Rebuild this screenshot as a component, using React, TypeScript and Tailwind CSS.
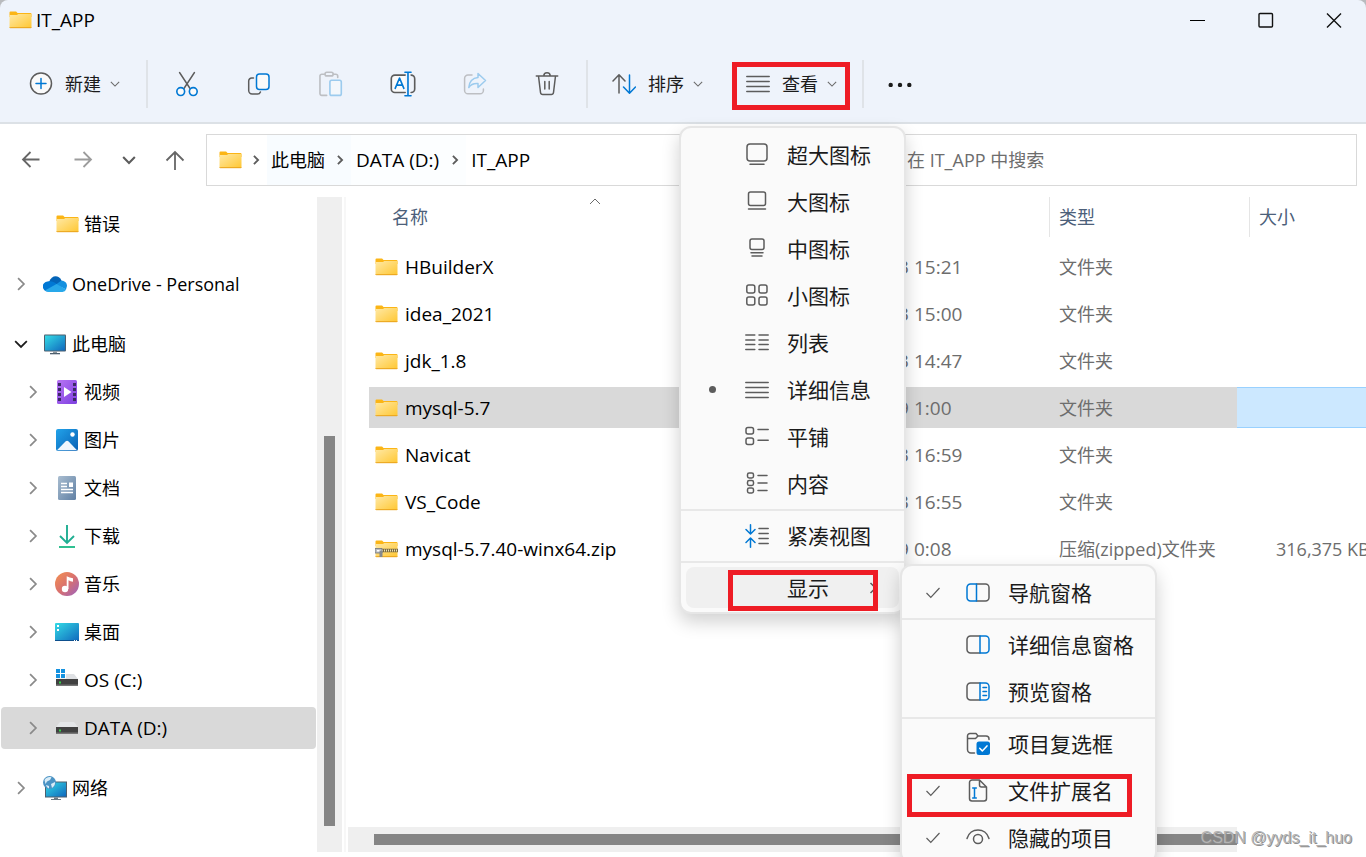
import type { ReactNode } from "react";

const GREY = "#5c5c5c";
const BLUE = "#0078d4";

interface TreeItem {
  label: string;
  icon: ReactNode;
  level: 0 | 1;
  state?: "open" | "closed";
  selected?: boolean;
  spaced?: boolean;
  drive?: boolean;
}

interface FileRow {
  name: string;
  date: string;
  time: string;
  type: string;
  size?: string;
  zip?: boolean;
  selected?: boolean;
}

interface MenuEntry {
  label: string;
  icon?: ReactNode;
  mark?: "dot" | "check";
  active?: boolean;
  submenu?: boolean;
  divided?: boolean;
}

/* ---------- icons ---------- */

function Icon({ children, size = 24 }: { children: ReactNode; size?: number }) {
  return (
    <svg
      width={size}
      height={size}
      viewBox="0 0 24 24"
      fill="none"
      stroke={GREY}
      strokeWidth="1.5"
      strokeLinecap="round"
      strokeLinejoin="round"
      className="shrink-0"
      aria-hidden="true"
    >
      {children}
    </svg>
  );
}

function FolderIcon({ zip }: { zip?: boolean }) {
  return (
    <svg width="23" height="18" viewBox="0 0 23 18" className="shrink-0" aria-hidden="true">
      <defs>
        <linearGradient id="folder" x1="0" y1="0" x2="1" y2="1">
          <stop offset="0" stopColor="#ffe9a6" />
          <stop offset="1" stopColor="#ffc732" />
        </linearGradient>
      </defs>
      <path d="M0.500 1.500a1 1 0 0 1 1-1h5.600l1.400 1.500H21.500a1 1 0 0 1 1 1V6h-22z" fill="#fbb516" />
      <path d="M0.500 4H8l1.300-1H22a.5.5 0 0 1 .5.5V16a1 1 0 0 1-1 1h-20a1 1 0 0 1-1-1z" fill="url(#folder)" />
      <path d="M0.500 16a1 1 0 0 0 1 .7h20a1 1 0 0 0 1-.7" fill="none" stroke="#e9a21b" />
      {zip && (
        <>
          <path d="M6 10.500h17" stroke="#7a6a3c" strokeWidth="3.500" />
          <path d="M7 10.500h16" stroke="#efe2b4" strokeWidth="2" strokeDasharray="1 1" />
          <path d="M0 8.500h7v4.500H0z" fill="#b9bcc0" stroke="#6f7378" strokeWidth=".8" />
          <path d="M4.500 11h3v6h-3z" fill="#85898d" />
          <path d="M2 10h2.500v1.500H2z" fill="#fff" />
        </>
      )}
    </svg>
  );
}

function Chevron({ dir, size = 12, color = "#8a8a8a", weight = 1.5 }: { dir: "up" | "down" | "right"; size?: number; color?: string; weight?: number }) {
  const paths = { up: "M1 7l5-5 5 5", down: "M1 3.500l5 5 5-5", right: "M3.500 1l5 5-5 5" };
  return (
    <svg width={size} height={size} viewBox="0 0 12 12" fill="none" stroke={color} strokeWidth={weight} className="shrink-0" aria-hidden="true">
      <path d={paths[dir]} />
    </svg>
  );
}

const newIcon = (
  <Icon>
    <circle cx="12" cy="11.500" r="10.500" fill="#fafafa" />
    <path d="M12 6.500v10M7 11.500h10" stroke={BLUE} />
  </Icon>
);
const cutIcon = (
  <Icon size={26}>
    <path d="M5.200 1.500l10 15.200M18.800 1.500l-10 15.200" />
    <circle cx="6.200" cy="19" r="3.600" stroke={BLUE} fill="#fafafa" />
    <circle cx="17.800" cy="19" r="3.600" stroke={BLUE} fill="#fafafa" />
  </Icon>
);
const copyIcon = (
  <Icon>
    <path d="M6.500 6H4.700A3 3 0 0 0 1.700 9v9.600A3.400 3.400 0 0 0 5.100 22h5.400a3 3 0 0 0 2.900-2" />
    <rect x="9.500" y="2" width="12.500" height="15.500" rx="3" stroke={BLUE} fill="#fafafa" />
  </Icon>
);
const pasteIcon = (
  <Icon size={26}>
    <path d="M6 3H3.500A1.700 1.700 0 0 0 1.800 4.700v16.100a1.700 1.700 0 0 0 1.700 1.700H8M14 3h2.500a1.700 1.700 0 0 1 1.700 1.700V6" stroke="#bdbfc3" />
    <rect x="6.500" y="1.200" width="7.500" height="3.300" rx="1.600" stroke="#bdbfc3" />
    <rect x="11" y="8.500" width="10.500" height="14" rx="1.600" stroke="#9ccbee" fill="#f3f7fb" />
  </Icon>
);
const renameIcon = (
  <Icon size={26}>
    <path d="M14 3.800H4.500a3.300 3.300 0 0 0-3.300 3.300v9.400a3.300 3.300 0 0 0 3.300 3.300H14" fill="#fafafa" />
    <path d="M19.500 3.800a3.300 3.300 0 0 1 3.300 3.300v9.400a3.300 3.300 0 0 1-3.300 3.300" />
    <path d="M4.800 16l4-9.500 4 9.500M6.200 13h5.200M16.600 1.200v21.600M13.800 1.200h5.600M13.800 22.800h5.600" stroke={BLUE} />
  </Icon>
);
const shareIcon = (
  <Icon>
    <path d="M9 3H5a3.400 3.400 0 0 0-3.400 3.400v12A3.400 3.400 0 0 0 5 21.800h12a3.400 3.400 0 0 0 3.400-3.400V17" stroke="#bdbfc3" />
    <path d="M15 1.500l7.500 7-7.500 7v-4c-4.500-.3-7.500 1.200-9.200 4C6 10 9.500 5.800 15 5.500z" stroke="#9ccbee" />
  </Icon>
);
const deleteIcon = (
  <Icon>
    <path d="M1.300 4h21.400M8.800 4a3.200 3.200 0 0 1 6.400 0M3.500 4l2 16.500a2.300 2.300 0 0 0 2.300 2h8.400a2.300 2.300 0 0 0 2.300-2l2-16.500M9.800 9.500v7.500M14.200 9.500v7.500" />
  </Icon>
);
const sortIcon = (
  <Icon>
    <path d="M7 21V3M1 9l6-6.300L13 9" />
    <path d="M17.500 3v18M11.500 15l6 6.300 6-6.300" stroke={BLUE} />
  </Icon>
);
const linesIcon = (
  <Icon>
    <path d="M.8 4.500h22.400M.8 9.500h22.400M.8 14.500h22.400M.8 19.500h22.400" />
  </Icon>
);

function PaneIcon({ side, preview }: { side: "left" | "right"; preview?: boolean }) {
  const left = "M9 3H4.500A3.500 3.500 0 0 0 1 6.500v10A3.500 3.500 0 0 0 4.500 20H9";
  const right = "M14 3h5.500A3.500 3.500 0 0 1 23 6.500v10a3.500 3.500 0 0 1-3.500 3.500H14z";
  if (side === "left") {
    return (
      <Icon>
        <path d="M10.500 3h9A3.500 3.500 0 0 1 23 6.500v10a3.500 3.500 0 0 1-3.500 3.500h-9" />
        <path d={left + "h1.500V3z"} stroke={BLUE} />
      </Icon>
    );
  }
  return (
    <Icon>
      <path d={left + "h5M9 3h5"} />
      <path d={right} stroke={BLUE} />
      {preview && <path d="M17 7.500h3.500M17 11.500h3.500M17 15.500h3.500" stroke={BLUE} />}
    </Icon>
  );
}

const tree: TreeItem[] = [
  { label: "错误", icon: <FolderIcon />, level: 1 },
  {
    label: "OneDrive - Personal",
    level: 0,
    state: "closed",
    spaced: true,
    icon: (
      <svg width="24" height="24" viewBox="0 0 24 24" aria-hidden="true">
        <path d="M6 10C8.500 3 15.500 2.500 18.500 8.500l1 3.500-8 3z" fill="#0364b8" />
        <path d="M5 19.500A5 5 0 0 1 4.500 9.500c3-1 6 .3 7.500 1.300l6 4-10 4.500z" fill="#0078d4" />
        <path d="M13 12.500l5-3.800c3.500-.5 6 2 6 5.300l-1 3.500z" fill="#1490df" />
        <path d="M2 18.500l11.500-6.500 9.700 5.500A4.500 4.500 0 0 1 19.500 20H5.500a5 5 0 0 1-3.500-1.500z" fill="#28a8ea" />
      </svg>
    ),
  },
  {
    label: "此电脑",
    level: 0,
    state: "open",
    spaced: true,
    icon: (
      <svg width="24" height="24" viewBox="0 0 24 24" aria-hidden="true">
        <defs>
          <linearGradient id="screen" x1="0" y1="0" x2="1" y2="1">
            <stop offset="0" stopColor="#34dbe6" />
            <stop offset="1" stopColor="#1068bd" />
          </linearGradient>
        </defs>
        <rect x="1" y="2.500" width="22" height="17" rx="1" fill="#4d5f6e" />
        <rect x="2" y="3.500" width="20" height="15" fill="url(#screen)" />
        <path d="M10 19.500h4V21h-4z" fill="#8c959c" />
        <path d="M7 21h10v1.300H7z" fill="#4d5f6e" />
      </svg>
    ),
  },
  {
    label: "视频",
    level: 1,
    state: "closed",
    icon: (
      <svg width="24" height="24" viewBox="0 0 24 24" aria-hidden="true">
        <defs>
          <linearGradient id="video" x1="0" y1="0" x2="1" y2="1">
            <stop offset="0" stopColor="#b874f4" />
            <stop offset="1" stopColor="#7d3fe0" />
          </linearGradient>
        </defs>
        <rect x="2" y="0" width="20" height="24" rx="1.500" fill="url(#video)" />
        <path d="M4.500 3v20M19.500 3v20" stroke="#3b2a66" strokeWidth="3" strokeDasharray="3 2" />
        <path d="M9 7l7.500 5L9 17z" fill="#fff" />
      </svg>
    ),
  },
  {
    label: "图片",
    level: 1,
    state: "closed",
    icon: (
      <svg width="24" height="24" viewBox="0 0 24 24" aria-hidden="true">
        <defs>
          <linearGradient id="photo" x1="0" y1="0" x2="1" y2="1">
            <stop offset="0" stopColor="#22a3ea" />
            <stop offset="1" stopColor="#0860b4" />
          </linearGradient>
        </defs>
        <rect x="1" y="1" width="22" height="22" rx="2" fill="url(#photo)" />
        <path d="M2 22.300l8.700-9a2 2 0 0 1 2.700 0l8.600 9z" fill="#eef6fd" />
        <circle cx="17.500" cy="6.500" r="2.200" fill="#fff" />
      </svg>
    ),
  },
  {
    label: "文档",
    level: 1,
    state: "closed",
    icon: (
      <svg width="24" height="24" viewBox="0 0 24 24" aria-hidden="true">
        <defs>
          <linearGradient id="docs" x1="0" y1="0" x2="1" y2="1">
            <stop offset="0" stopColor="#a9bdd0" />
            <stop offset="1" stopColor="#6080a4" />
          </linearGradient>
        </defs>
        <rect x="3" y="0" width="18" height="24" rx="1.500" fill="url(#docs)" />
        <path d="M6 7.500h6M6 10.500h6M6 13.500h12M6 16.500h12" stroke="#fff" strokeWidth="1.400" />
        <path d="M14 6.500h4v4.500h-4z" fill="#fff" />
      </svg>
    ),
  },
  {
    label: "下载",
    level: 1,
    state: "closed",
    icon: (
      <svg width="24" height="24" viewBox="0 0 24 24" fill="none" aria-hidden="true">
        <path d="M12 1v17M5 12l7 7 7-7" stroke="#1fae92" strokeWidth="1.900" />
        <path d="M4 23h16" stroke="#25bd8c" strokeWidth="1.900" />
      </svg>
    ),
  },
  {
    label: "音乐",
    level: 1,
    state: "closed",
    icon: (
      <svg width="24" height="24" viewBox="0 0 24 24" aria-hidden="true">
        <defs>
          <linearGradient id="music" x1="0" y1="0" x2="1" y2="1">
            <stop offset="0" stopColor="#f4914f" />
            <stop offset=".5" stopColor="#d9716f" />
            <stop offset="1" stopColor="#9a62c0" />
          </linearGradient>
        </defs>
        <circle cx="12" cy="12" r="12" fill="url(#music)" />
        <circle cx="10" cy="17" r="3.200" fill="#fff" />
        <path d="M11.700 17V4.200c2 1 4 1.600 6.300 2v3.600c-1.800-.2-3.300-.7-4.500-1.500V17z" fill="#fff" />
      </svg>
    ),
  },
  {
    label: "桌面",
    level: 1,
    state: "closed",
    icon: (
      <svg width="24" height="24" viewBox="0 0 24 24" aria-hidden="true">
        <rect x="0" y="3" width="24" height="18" rx="1" fill="url(#screen)" />
        <path d="M0 20h24v1H0z" fill="#0d4f8d" />
        <path d="M2 5h2v2H2zM2 9h2v2H2zM19 20h1v1h-1zM21 20h1v1h-1z" fill="#fff" />
      </svg>
    ),
  },
  {
    label: "OS (C:)",
    level: 1,
    state: "closed",
    drive: true,
    icon: (
      <svg width="24" height="24" viewBox="0 0 24 24" aria-hidden="true">
        <path d="M9 6h10l4 5H1z" fill="#dfe1e4" />
        <path d="M1 11h22v7H1z" fill="#414141" />
        <path d="M1 16.500h22V18H1z" fill="#777" />
        <path d="M4 13.500h2v2H4z" fill="#35d04a" />
        <path d="M0 0h11v10.500H0z" fill="#fff" />
        <path d="M1 1h4v4H1zM6 1h4v4H6zM1 6h4v4H1zM6 6h4v4H6z" fill="#1492e0" />
      </svg>
    ),
  },
  {
    label: "DATA (D:)",
    level: 1,
    state: "closed",
    drive: true,
    selected: true,
    icon: (
      <svg width="24" height="24" viewBox="0 0 24 24" aria-hidden="true">
        <path d="M5 6h14l4 5H1z" fill="#e4e6e8" />
        <path d="M1 11h22v7H1z" fill="#414141" />
        <path d="M1 16.500h22V18H1z" fill="#777" />
        <path d="M4 13.500h2v2H4z" fill="#35d04a" />
      </svg>
    ),
  },
  {
    label: "网络",
    level: 0,
    state: "closed",
    spaced: true,
    icon: (
      <svg width="24" height="24" viewBox="0 0 24 24" aria-hidden="true">
        <rect x="2" y="5.500" width="22" height="16" fill="#4d5f6e" />
        <rect x="3" y="6.500" width="20" height="14" fill="url(#screen)" />
        <path d="M11 21.500h4V23h-4zM8 23h10v1H8z" fill="#6b7882" />
        <circle cx="6.500" cy="6.500" r="6.500" fill="#4b93c4" />
        <path d="M1.500 4c2-3 5-3.500 7-2.500L7 4 4 5.500 2.500 8zM8 8l4-2c.3 3-1 4.500-3 6zM3 9l3 1v2.500C4.500 12 3.500 11 3 9z" fill="#d9ecf7" />
      </svg>
    ),
  },
];

const files: FileRow[] = [
  { name: "HBuilderX", date: "2022/10/13", time: "15:21", type: "文件夹" },
  { name: "idea_2021", date: "2022/10/13", time: "15:00", type: "文件夹" },
  { name: "jdk_1.8", date: "2022/10/13", time: "14:47", type: "文件夹" },
  { name: "mysql-5.7", date: "2022/10/19", time: "1:00", type: "文件夹", selected: true },
  { name: "Navicat", date: "2022/10/13", time: "16:59", type: "文件夹" },
  { name: "VS_Code", date: "2022/10/13", time: "16:55", type: "文件夹" },
  { name: "mysql-5.7.40-winx64.zip", date: "2022/10/19", time: "0:08", type: "压缩(zipped)文件夹", size: "316,375 KB", zip: true },
];

const viewMenu: MenuEntry[] = [
  {
    label: "超大图标",
    icon: (
      <Icon>
        <rect x="2" y="1" width="20" height="17" rx="3" />
        <path d="M5 21.300h14" />
      </Icon>
    ),
  },
  {
    label: "大图标",
    icon: (
      <Icon>
        <rect x="3.500" y="2" width="17" height="13.500" rx="2" />
        <path d="M3.500 19h17" />
      </Icon>
    ),
  },
  {
    label: "中图标",
    icon: (
      <Icon>
        <rect x="5" y="2" width="14" height="10.500" rx="2" />
        <path d="M6 15.700h12M7 18.900h10" />
      </Icon>
    ),
  },
  {
    label: "小图标",
    icon: (
      <Icon>
        <rect x="1.800" y="1" width="8" height="8" rx="2" />
        <rect x="14" y="1" width="8" height="8" rx="2" />
        <rect x="1.800" y="13" width="8" height="8" rx="2" />
        <rect x="14" y="13" width="8" height="8" rx="2" />
      </Icon>
    ),
  },
  {
    label: "列表",
    icon: (
      <Icon>
        <path d="M.8 4h9M.8 9h9M.8 13.500h9M.8 18.500h9M14 4h9.200M14 9h9.200M14 13.500h9.200M14 18.500h9.200" />
      </Icon>
    ),
  },
  { label: "详细信息", icon: linesIcon, mark: "dot" },
  {
    label: "平铺",
    icon: (
      <Icon>
        <rect x="1" y="2.500" width="7.500" height="6.500" rx="2" />
        <rect x="1" y="13" width="7.500" height="6.500" rx="2" />
        <path d="M13 4.500h10.200M13 15.200h10.200" />
      </Icon>
    ),
  },
  {
    label: "内容",
    icon: (
      <Icon>
        <rect x="2.500" y="1" width="6" height="5" rx="1.700" />
        <rect x="2.500" y="8.500" width="6" height="5" rx="1.700" />
        <rect x="2.500" y="16" width="6" height="5" rx="1.700" />
        <path d="M13 3.500h9M13 11h9M13 18.500h9" />
      </Icon>
    ),
  },
  {
    label: "紧凑视图",
    divided: true,
    icon: (
      <Icon>
        <path d="M5.500.8v8.700M1 5.500l4.500 4.500L10 5.500M5.500 23.200v-8.700M1 18.500L5.500 14l4.500 4.500" stroke={BLUE} />
        <path d="M14 4.500h9.200M14 9.500h9.200M14 14.500h9.200M14 19.500h9.200" />
      </Icon>
    ),
  },
  { label: "显示", divided: true, active: true, submenu: true },
];

const showMenu: MenuEntry[] = [
  { label: "导航窗格", mark: "check", icon: <PaneIcon side="left" /> },
  { label: "详细信息窗格", divided: true, icon: <PaneIcon side="right" /> },
  { label: "预览窗格", icon: <PaneIcon side="right" preview /> },
  {
    label: "项目复选框",
    divided: true,
    icon: (
      <Icon>
        <path d="M8.500 21H5a3.500 3.500 0 0 1-3.500-3.500V4A2.500 2.500 0 0 1 4 1.500h6L12 4h8a3 3 0 0 1 3 3v.5M1.500 6.500h8L12 4" />
        <rect x="10.500" y="9.500" width="13.500" height="13.500" rx="2.500" fill={BLUE} stroke="none" />
        <path d="M13.700 16.300l2.600 2.600 4.700-5" stroke="#fff" />
      </Icon>
    ),
  },
  {
    label: "文件扩展名",
    mark: "check",
    icon: (
      <Icon>
        <path d="M13.500 1H6a2.500 2.500 0 0 0-2.500 2.500v16A2.500 2.500 0 0 0 6 22h12a2.500 2.500 0 0 0 2.500-2.500V8zv5a2 2 0 0 0 2 2h5" />
        <path d="M8.500 9v10M6.700 9h3.600M6.700 19h3.600" stroke={BLUE} />
      </Icon>
    ),
  },
  {
    label: "隐藏的项目",
    mark: "check",
    icon: (
      <Icon>
        <path d="M1 12.500C4 1 20 1 23 12.500" />
        <circle cx="12" cy="13" r="4.500" />
      </Icon>
    ),
  },
];

/* ---------- pieces ---------- */

function ToolButton({ label, icon }: { label: string; icon: ReactNode }) {
  return (
    <button type="button" aria-label={label} className="flex h-12 w-[72px] items-center justify-center">
      {icon}
    </button>
  );
}

function LabelButton({ label, icon }: { label: string; icon: ReactNode }) {
  return (
    <button type="button" className="flex h-12 items-center">
      {icon}
      <span className="ml-3 mr-[9px]">{label}</span>
      <Chevron dir="down" size={10} color="#6b6b6b" weight={1.3} />
    </button>
  );
}

function ToolDivider() {
  return <div className="h-12 w-[2px] bg-[#dfe3e8]" />;
}

function CrumbArrow() {
  return (
    <span className="flex h-full w-[22px] items-center justify-center">
      <Chevron dir="right" size={10} color="#5c5c5c" weight={2.2} />
    </span>
  );
}

function TreeRow({ item }: { item: TreeItem }) {
  return (
    <li className={item.spaced ? "pt-3" : ""}>
      <a
        href="#"
        className={`mx-px mb-[6px] flex h-[42px] items-center rounded-sm ${item.level === 1 ? "pl-[25px]" : "pl-[13px]"} ${
          item.selected ? "bg-[#d9d9d9]" : ""
        } ${item.drive ? "text-[19px]" : ""}`}
      >
        <span className="flex w-[14px] justify-center">
          {item.state && (
            <Chevron
              dir={item.state === "open" ? "down" : "right"}
              size={14}
              color={item.state === "open" ? "#1b1b1b" : "#8a8a8a"}
            />
          )}
        </span>
        <span className="ml-[15px] mr-[5px] flex w-6 justify-center">{item.icon}</span>
        {item.label}
      </a>
    </li>
  );
}

function Menu({ entries, label }: { entries: MenuEntry[]; label: string }) {
  return (
    <div
      role="menu"
      aria-label={label}
      className="rounded-xl border-2 border-[#e6e6e6] bg-[#fafafa] pb-px pt-[3px] text-[21px] text-[#1b1b1b] shadow-[0_8px_18px_rgba(0,0,0,0.18)]"
    >
      {entries.map((entry) => (
        <div key={entry.label}>
          {entry.divided && <div className="mb-px mt-[2px] h-[2px] bg-[#e8e8e8]" />}
          <div className="px-[5px] py-[3px]">
            <button
              type="button"
              role="menuitem"
              className={`flex h-[41px] w-full items-center rounded-lg pl-[14px] pr-5 ${entry.active ? "bg-[#f0f0f0]" : ""}`}
            >
              <span className="flex w-6 shrink-0 justify-center">
                {entry.mark === "dot" && <span className="size-[7px] rounded-full bg-[#5c5c5c]" />}
                {entry.mark === "check" && (
                  <svg width="14" height="14" viewBox="0 0 14 14" fill="none" stroke={GREY} strokeWidth="1.200" aria-hidden="true">
                    <path d="M.5 7l4.300 4.300L13.500 2" />
                  </svg>
                )}
              </span>
              <span className="ml-[21px] mr-[18px] flex w-6 shrink-0">{entry.icon}</span>
              <span className="flex-1 whitespace-nowrap text-left">{entry.label}</span>
              {entry.submenu && <Chevron dir="right" color="#5c5c5c" />}
            </button>
          </div>
        </div>
      ))}
    </div>
  );
}

export default function App() {
  return (
    <div className="relative flex h-screen flex-col overflow-hidden bg-white font-['Open_Sans','Noto_Sans_CJK_SC',sans-serif] text-[18px] leading-6 text-black">
      <div className="shrink-0 bg-[#b9bbbe]">
        <header className="rounded-t-lg border-b-2 border-[#dce1e6] bg-[#eef3fb]">
          <div className="flex h-10 items-center pl-[9px] pr-6">
            <FolderIcon />
            <h1 className="ml-1 flex-1 text-[19px]">IT_APP</h1>
            <div className="flex gap-[52px]">
              <button type="button" aria-label="最小化">
                <svg width="16" height="16" viewBox="0 0 16 16" fill="none" stroke="#000">
                  <path d="M0 8.500h15" />
                </svg>
              </button>
              <button type="button" aria-label="最大化">
                <svg width="16" height="16" viewBox="0 0 16 16" fill="none" stroke="#111" strokeWidth="1.400">
                  <rect x="1" y="1.500" width="13.500" height="13.500" rx="1" />
                </svg>
              </button>
              <button type="button" aria-label="关闭">
                <svg width="16" height="16" viewBox="0 0 16 16" fill="none" stroke="#111" strokeWidth="1.400">
                  <path d="M1 1.500l14 14M15 1.500l-14 14" />
                </svg>
              </button>
            </div>
          </div>
          <div className="flex items-center pb-[14px] pl-[29px] pt-5 text-[#1b1b1b]">
            <LabelButton label="新建" icon={newIcon} />
            <div className="flex items-center gap-[3px] pl-[26px] pr-6">
              <ToolDivider />
              <div className="flex">
                <ToolButton label="剪切" icon={cutIcon} />
                <ToolButton label="复制" icon={copyIcon} />
                <ToolButton label="粘贴" icon={pasteIcon} />
                <ToolButton label="重命名" icon={renameIcon} />
                <ToolButton label="共享" icon={shareIcon} />
                <ToolButton label="删除" icon={deleteIcon} />
              </div>
              <ToolDivider />
            </div>
            <div className="flex gap-[43px] pr-[25px]">
              <LabelButton label="排序" icon={sortIcon} />
              <LabelButton label="查看" icon={linesIcon} />
            </div>
            <ToolDivider />
            <ToolButton
              label="更多"
              icon={
                <svg width="24" height="6" viewBox="0 0 24 6" fill="#1b1b1b" aria-hidden="true">
                  <circle cx="2.700" cy="4" r="2.200" />
                  <circle cx="12" cy="4" r="2.200" />
                  <circle cx="21.300" cy="4" r="2.200" />
                </svg>
              }
            />
          </div>
        </header>
      </div>

      <div className="flex shrink-0 items-center pb-[11px] pl-5 pr-[9px] pt-[10px]">
        <nav className="flex w-[186px] items-center" aria-label="导航">
          <button type="button" aria-label="后退" className="mr-[30px]">
            <svg width="22" height="22" viewBox="0 0 22 22" fill="none" stroke="#666" strokeWidth="1.800">
              <path d="M19.500 10.500H3M10.500 3L3 10.500l7.500 7.500" />
            </svg>
          </button>
          <button type="button" aria-label="前进" className="mr-[28px]">
            <svg width="22" height="22" viewBox="0 0 22 22" fill="none" stroke="#9c9c9c" strokeWidth="1.800">
              <path d="M2.500 10.500H19M11.500 3l7.500 7.500-7.500 7.500" />
            </svg>
          </button>
          <button type="button" aria-label="最近" className="mr-[28px]">
            <Chevron dir="down" size={14} color="#5c5c5c" weight={1.8} />
          </button>
          <button type="button" aria-label="上移">
            <svg width="22" height="22" viewBox="0 0 22 22" fill="none" stroke="#666" strokeWidth="1.800">
              <path d="M11 21V3M2.500 11.500L11 3l8.500 8.500" />
            </svg>
          </button>
        </nav>
        <div className="flex h-[52px] flex-1 items-center border border-[#d9d9d9] pl-3">
          <FolderIcon />
          <div className="ml-[3px] flex h-full items-center">
            <CrumbArrow />
            <a href="#" className="flex h-full items-center bg-[#f8fcff] px-1">
              此电脑
            </a>
          </div>
          <div className="flex h-full items-center bg-[#f8fcff]">
            <CrumbArrow />
          </div>
          <div className="flex h-full items-center bg-[#fcfeff] text-[19px]">
            <a href="#" className="px-[5px]">
              DATA (D:)
            </a>
            <CrumbArrow />
          </div>
          <a href="#" className="px-[5px] text-[19px]">
            IT_APP
          </a>
        </div>
        <input
          type="search"
          aria-label="搜索"
          placeholder="在 IT_APP 中搜索"
          className="ml-[10px] h-[52px] w-[498px] border border-[#d9d9d9] pl-[47px] placeholder:text-[#6d6d6d] placeholder:opacity-100"
        />
      </div>

      <div className="flex min-h-0 flex-1 pb-[5px]">
        <ul className="w-[317px] shrink-0 pt-[6px]">
          {tree.map((item) => (
            <TreeRow key={item.label} item={item} />
          ))}
        </ul>
        <div className="flex w-[25px] shrink-0 flex-col items-center bg-[#efefef] pb-[26px]">
          <div className="mt-auto h-[62%] w-[11px] bg-[#858585]" />
        </div>
        <div className="ml-[2px] w-[2px] shrink-0 bg-[#f7f7f7]" />

        <main className="flex min-w-0 flex-1 flex-col overflow-hidden pl-[2px]">
          <div className="min-h-0 flex-1 overflow-hidden pl-[21px]">
            <table className="w-full table-fixed border-separate border-spacing-0 whitespace-nowrap text-left text-[#6d6d6d]">
              <colgroup>
                <col className="w-[438px]" />
                <col className="w-[242px]" />
                <col className="w-[188px]" />
                <col />
              </colgroup>
              <thead>
                <tr className="h-[46px] align-top text-[#4c607a]">
                  <th className="p-0 font-normal">
                    <div className="relative flex h-10 items-center pl-[23px]">
                      名称
                      <span className="absolute left-1/2 top-0 ml-px">
                        <Chevron dir="up" size={12} color="#6b6b6b" weight={1} />
                      </span>
                    </div>
                  </th>
                  <th className="p-0" aria-label="修改日期" />
                  <th className="p-0 font-normal">
                    <div className="flex h-10 items-center border-l border-[#e5e5e5] pl-[9px]">类型</div>
                  </th>
                  <th className="p-0 font-normal">
                    <div className="ml-3 flex h-10 items-center border-l border-[#e5e5e5] pl-[9px]">大小</div>
                  </th>
                </tr>
              </thead>
              <tbody>
                {files.map((file) => {
                  const cell = `h-[47px] border-y-[3px] border-transparent bg-clip-padding p-0 ${file.selected ? "bg-[#d9d9d9]" : ""}`;
                  return (
                    <tr key={file.name}>
                      <td className={cell}>
                        <div className="flex items-center gap-[7px] pl-[6px] text-[19px] text-black">
                          <FolderIcon zip={file.zip} />
                          {file.name}
                        </div>
                      </td>
                      <td className={cell}>
                        <div className="flex gap-[5px] text-[19px]">
                          <span className="w-[102px] text-right">{file.date}</span>
                          <span>{file.time}</span>
                        </div>
                      </td>
                      <td className={`${cell} pl-[10px]`}>{file.type}</td>
                      <td className="h-[47px] overflow-hidden py-[3px] pl-0 pr-0">
                        <div
                          className={`flex h-[41px] items-center pl-[39px] ${
                            file.selected ? "border-y border-[#99d1ff] bg-[#cce8ff]" : ""
                          }`}
                        >
                          {file.size}
                        </div>
                      </td>
                    </tr>
                  );
                })}
              </tbody>
            </table>
          </div>
          <div className="mr-[129px] flex h-[25px] shrink-0 items-center bg-[#efefef] pl-[26px]">
            <div className="h-[11px] flex-1 bg-[#858585]" />
          </div>
        </main>
      </div>

      {/* open menus */}
      <div className="absolute left-[679px] top-[126px] w-[227px]">
        <Menu entries={viewMenu} label="查看" />
      </div>
      <div className="absolute left-[900px] top-[564px] w-[257px]">
        <Menu entries={showMenu} label="显示" />
      </div>

      {/* highlights */}
      <div className="pointer-events-none absolute left-[732px] top-[62px] h-12 w-[118px] border-[5px] border-[#ee1c25]" />
      <div className="pointer-events-none absolute left-[728px] top-[570px] h-[41px] w-[150px] border-[5px] border-[#ee1c25]" />
      <div className="pointer-events-none absolute left-[907px] top-[774px] h-[43px] w-[225px] border-[5px] border-[#ee1c25]" />

      <p className="absolute bottom-[7px] right-[14px] font-['Liberation_Sans',sans-serif] text-[16px] text-[#b4b4b4] [text-shadow:1px_1px_0_#8f8f8f]">
        CSDN @yyds_it_huo
      </p>
    </div>
  );
}
